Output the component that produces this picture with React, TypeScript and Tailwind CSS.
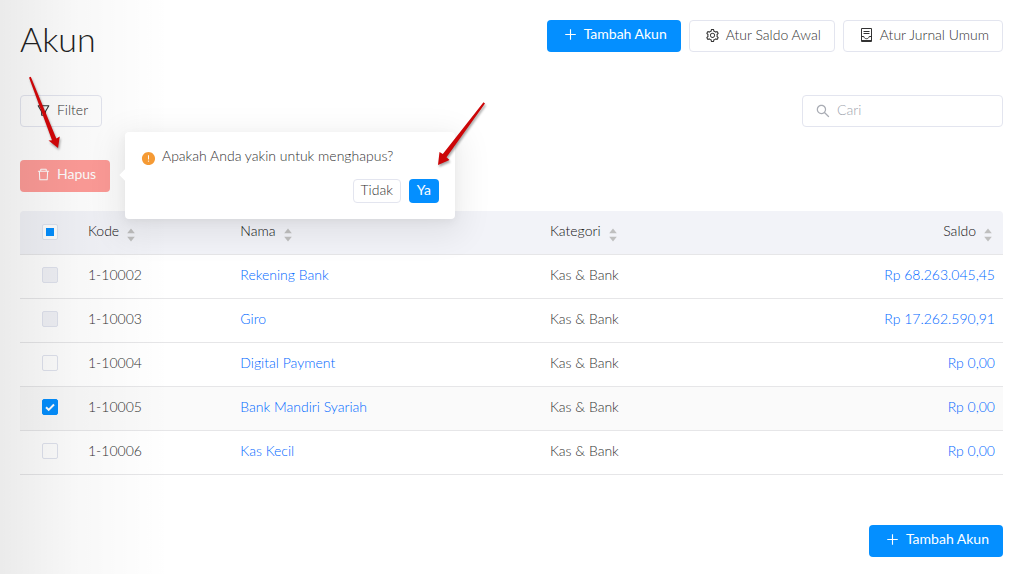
import { useState } from "react";
import type { ReactNode } from "react";
import {
  AiOutlinePlus,
  AiOutlineSetting,
  AiOutlineFilter,
  AiOutlineDelete,
  AiOutlineSearch,
  AiFillExclamationCircle,
} from "react-icons/ai";

type Account = { code: string; name: string; category: string; balance: string; locked?: boolean };

const accounts: Account[] = [
  { code: "1-10002", name: "Rekening Bank", category: "Kas & Bank", balance: "Rp 68.263.045,45", locked: true },
  { code: "1-10003", name: "Giro", category: "Kas & Bank", balance: "Rp 17.262.590,91", locked: true },
  { code: "1-10004", name: "Digital Payment", category: "Kas & Bank", balance: "Rp 0,00" },
  { code: "1-10005", name: "Bank Mandiri Syariah", category: "Kas & Bank", balance: "Rp 0,00" },
  { code: "1-10006", name: "Kas Kecil", category: "Kas & Bank", balance: "Rp 0,00" },
];

function JournalIcon() {
  return (
    <svg width="15" height="14" viewBox="0 0 15 14" fill="none" stroke="currentColor" aria-hidden="true">
      <path d="M2.500 .5h10v13h-10z" />
      <path d="M4.500 3.500h6M4.500 5.500h6" />
      <path d="M2.500 8.500h2.300c.3 1.400 1.300 2.200 2.700 2.200s2.400-.8 2.700-2.200h2.300M2.500 12.500h10" />
    </svg>
  );
}

function PrimaryButton({ children }: { children: ReactNode }) {
  return (
    <button type="button" className="flex h-8 items-center gap-1.5 rounded bg-[#048fff] pr-3.5 pb-1 pl-4 font-normal text-white">
      {children}
    </button>
  );
}

function OutlineButton({ children }: { children: ReactNode }) {
  return (
    <button type="button" className="flex h-8 items-center gap-1.5 rounded border border-[#e3e5ef] pr-[13px] pb-0.5 pl-[15px]">
      {children}
    </button>
  );
}

function Sorter() {
  return (
    <svg className="mt-1.5" width="8" height="14" viewBox="0 0 8 14" fill="#bfbfbf" aria-hidden="true">
      <path d="M4 .5 7.800 5.200H.2zM4 13.500.2 8.800h7.600z" />
    </svg>
  );
}

function Tick({
  label,
  checked,
  disabled,
  mixed,
  onChange,
}: {
  label: string;
  checked: boolean;
  disabled?: boolean;
  mixed?: boolean;
  onChange: () => void;
}) {
  return (
    <label className="relative mx-auto block size-4">
      <input
        type="checkbox"
        aria-label={label}
        checked={checked}
        disabled={disabled}
        onChange={onChange}
        ref={(el) => {
          if (el) el.indeterminate = !!mixed;
        }}
        className="peer block size-4 appearance-none rounded-xs border border-[#e0e3ee] bg-white checked:border-[#048fff] checked:bg-[#048fff] disabled:bg-[#f1f2f7]"
      />
      <svg
        className="pointer-events-none absolute inset-0 hidden peer-checked:block"
        width="16"
        height="16"
        viewBox="0 0 16 16"
        fill="none"
        stroke="#fff"
        strokeWidth="2"
        aria-hidden="true"
      >
        <path d="m4 8.200 2.700 2.700L12 5.500" />
      </svg>
      <span className="pointer-events-none absolute inset-1 hidden bg-[#048fff] peer-indeterminate:block" />
    </label>
  );
}

export default function App() {
  const [selected, setSelected] = useState<string[]>(["1-10005"]);
  const toggle = (code: string) =>
    setSelected((s) => (s.includes(code) ? s.filter((c) => c !== code) : [...s, code]));
  const free = accounts.filter((a) => !a.locked).map((a) => a.code);
  const all = selected.length === free.length;

  return (
    <div className="relative min-h-screen bg-white py-5 pr-[22px] pl-5 font-['Lato','Open_Sans',sans-serif] text-sm font-light text-[#333]">
      <header className="flex items-start justify-between">
        <h1 className="text-[34px] leading-[38px] text-[#222]">Akun</h1>
        <div className="flex gap-2">
          <PrimaryButton>
            <AiOutlinePlus size={15} />
            Tambah Akun
          </PrimaryButton>
          <OutlineButton>
            <AiOutlineSetting size={15} />
            Atur Saldo Awal
          </OutlineButton>
          <OutlineButton>
            <JournalIcon />
            Atur Jurnal Umum
          </OutlineButton>
        </div>
      </header>

      <div className="mt-[37px] flex justify-between">
        <OutlineButton>
          <AiOutlineFilter size={15} />
          Filter
        </OutlineButton>
        <label className="flex h-8 w-[201px] items-center gap-1.5 rounded border border-[#e3e5ef] px-3 text-[#a9acb4]">
          <AiOutlineSearch size={16} className="shrink-0" />
          <input
            type="search"
            aria-label="Cari"
            placeholder="Cari"
            className="w-full min-w-0 bg-transparent pb-0.5 outline-none placeholder:text-[#a0a4ae]"
          />
        </label>
      </div>

      <div className="relative mt-[33px] w-fit">
        <button type="button" className="flex h-8 items-center gap-1.5 rounded bg-[#ff9c98] pr-3.5 pb-1 pl-4 font-normal text-white">
          <AiOutlineDelete size={15} />
          Hapus
        </button>
        <div
          role="dialog"
          aria-label="Konfirmasi hapus"
          className="absolute -top-7 left-[105px] z-20 w-[330px] rounded bg-white px-4 pt-[13px] pb-4 shadow-[0_9px_32px_8px_rgba(0,0,0,0.07),0_3px_10px_rgba(0,0,0,0.05)]"
        >
          <span className="absolute top-[39px] -left-1 size-2 rotate-45 bg-white" />
          <p className="flex items-center gap-1.5 leading-[22px]">
            <AiFillExclamationCircle size={15} className="mt-1 text-[#f59a34]" />
            Apakah Anda yakin untuk menghapus?
          </p>
          <div className="mt-3 flex justify-end gap-2">
            <button type="button" className="flex h-6 items-center rounded border border-[#e3e5ef] px-[7px] pb-0.5">
              Tidak
            </button>
            <button type="button" className="flex h-6 items-center rounded bg-[#048fff] px-2 pb-0.5 font-normal text-white">
              Ya
            </button>
          </div>
        </div>
      </div>

      <table className="mt-[19px] w-full table-fixed border-separate border-spacing-0">
        <colgroup>
          <col className="w-[60px]" />
          <col className="w-[15.5%]" />
          <col className="w-[31.5%]" />
          <col />
          <col />
        </colgroup>
        <thead>
          <tr className="text-left text-[#111] [&>th]:h-11 [&>th]:border-b [&>th]:border-[#e6e6e8] [&>th]:bg-[#f2f3f8] [&>th]:px-2 [&>th]:pb-0.5 [&>th]:font-light">
            <th className="rounded-tl">
              <Tick
                label="Pilih semua"
                checked={all}
                mixed={selected.length > 0 && !all}
                onChange={() => setSelected(all ? [] : free)}
              />
            </th>
            {["Kode", "Nama", "Kategori"].map((title) => (
              <th key={title}>
                <span className="flex items-center gap-2">
                  <span className="pb-0.5">{title}</span>
                  <Sorter />
                </span>
              </th>
            ))}
            <th className="rounded-tr">
              <span className="flex items-center justify-end gap-2 pr-[3px]">
                <span className="pb-0.5">Saldo</span>
                <Sorter />
              </span>
            </th>
          </tr>
        </thead>
        <tbody>
          {accounts.map((a) => {
            const on = selected.includes(a.code);
            return (
              <tr
                key={a.code}
                className={`[&>td]:h-11 [&>td]:border-b [&>td]:border-[#e6e6e8] [&>td]:px-2 [&>td]:pb-[3px] ${on ? "bg-[#fafafa]" : "bg-white"}`}
              >
                <td>
                  <Tick label={`Pilih ${a.name}`} checked={on} disabled={a.locked} onChange={() => toggle(a.code)} />
                </td>
                <td>{a.code}</td>
                <td>
                  <a href="#" className="text-[#0068ff]">{a.name}</a>
                </td>
                <td>{a.category}</td>
                <td className="text-right">
                  <a href="#" className="text-[#0068ff]">{a.balance}</a>
                </td>
              </tr>
            );
          })}
        </tbody>
      </table>

      <footer className="mt-[50px] flex justify-end">
        <PrimaryButton>
          <AiOutlinePlus size={15} />
          Tambah Akun
        </PrimaryButton>
      </footer>

      <div className="pointer-events-none absolute inset-y-0 left-0 z-10 w-[170px] bg-linear-to-r from-black/8 via-black/3 via-45% to-transparent" />

      <svg
        className="pointer-events-none absolute top-0 left-0 z-30 drop-shadow-[1px_2px_1px_rgba(0,0,0,0.35)]"
        width="500"
        height="180"
        viewBox="0 0 500 180"
        fill="#cc0608"
        aria-hidden="true"
      >
        <path d="M29 77.500 30.800 76.800 56.300 138.500 59.800 136.500 58 148 48.500 140.500 52 140.300z" />
        <path d="M483.500 102.300 485 103.500 446.500 157.300 449.500 160 438 165 439.500 152 442.800 154z" />
      </svg>
    </div>
  );
}
